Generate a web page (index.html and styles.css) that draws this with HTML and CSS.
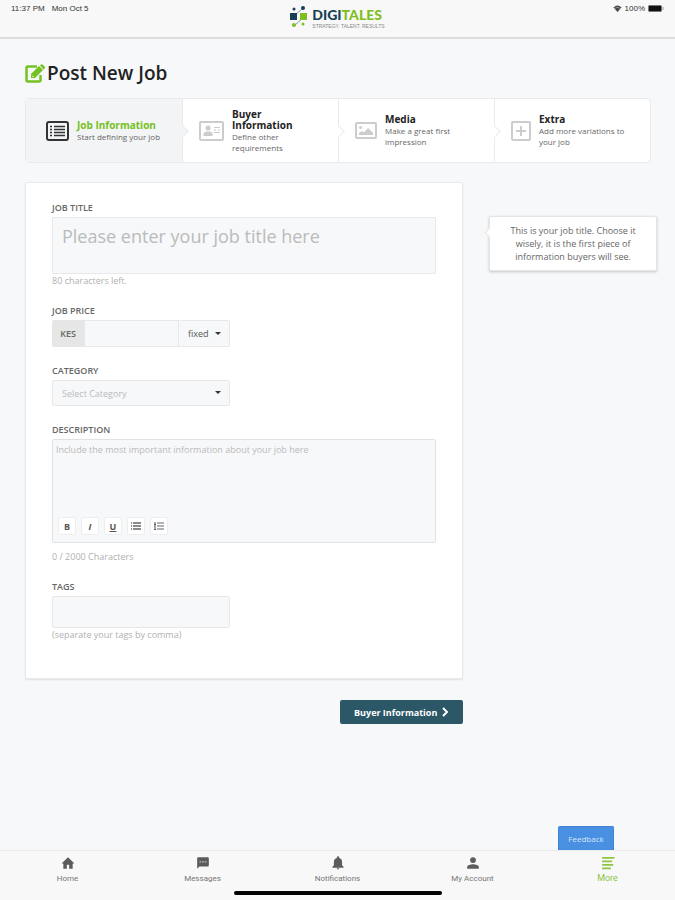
FILE: index.html
```html
<!DOCTYPE html>
<html lang="en">
<head>
  <meta charset="UTF-8">
  <meta name="viewport" content="width=device-width, initial-scale=1.0">
  <title>Post New Job</title>
  <link rel="stylesheet" href="styles.css">
</head>
<body>
  <header class="topbar">
    <div class="status-left"><span>11:37 PM</span><span>Mon Oct 5</span></div>
    <div class="logo">
      <svg width="18" height="22" viewBox="0 0 18 22">
        <path d="M4 10L13 2M5 19L14 11" stroke="#7f9aa6" stroke-width="1"/>
        <rect x="0" y="7" width="7" height="7" fill="#173f55"/>
        <rect x="10" y="7" width="7" height="7" fill="#80bd21"/>
        <circle cx="4" cy="3" r="1.5" fill="#173f55"/>
        <circle cx="13" cy="2" r="2" fill="#173f55"/>
        <circle cx="4" cy="19" r="2" fill="#80bd21"/>
        <circle cx="13" cy="18" r="1.5" fill="#80bd21"/>
      </svg>
      <div class="logo-text">
        <div class="logo-name">DIGI<span>TALES</span></div>
        <div class="logo-tag">STRATEGY. TALENT. RESULTS</div>
      </div>
    </div>
    <div class="status-right">
      <svg width="9" height="7" viewBox="0 0 18 14"><path d="M1 5Q9-3 17 5L9 14Z" fill="#444"/><path d="M3 7Q9 2 15 7" fill="none" stroke="#f8f8f8" stroke-width="1"/></svg>
      <span>100%</span>
      <svg width="16" height="7" viewBox="0 0 16 7"><rect x=".5" y=".5" width="13" height="6" rx="1" fill="#111" stroke="#777"/><path d="M15 2v3" stroke="#999"/></svg>
    </div>
  </header>

  <main class="content">
    <h1 class="page-title">
      <svg width="21" height="19" viewBox="0 0 21 19">
        <path d="M12 2.500H3Q1.500 2.500 1.500 4V16Q1.500 17.500 3 17.500H14Q15.500 17.500 15.500 16V11" fill="none" stroke="#74c120" stroke-width="2.500"/>
        <path d="M6 14V10L14 2L18 6L10 14ZM15 1.500L16 .5Q17 0 18 1L20 3Q20.500 4 19.500 4.500L18.500 5.500Z" fill="#74c120"/>
        <path d="M7 11.500L8.500 13" stroke="#fff" stroke-width="1"/>
      </svg>
      Post New Job
    </h1>

    <ol class="steps">
      <li class="step active">
        <svg class="step-icon" width="23" height="20" viewBox="0 0 23 20">
          <rect x="1" y="1" width="21" height="18" rx="2" fill="none" stroke="#333" stroke-width="2"/>
          <path d="M4 5.500h2M4 8.500h2M4 11.500h2M4 14.500h2M8 5.500h11M8 8.500h11M8 11.500h11M8 14.500h11" stroke="#333" stroke-width="1.500"/>
        </svg>
        <div><h2>Job Information</h2><p>Start defining your job</p></div>
      </li>
      <li class="step">
        <svg class="step-icon" width="25" height="20" viewBox="0 0 25 20">
          <rect x="1" y="1" width="23" height="18" rx="1" fill="none" stroke="#ccc" stroke-width="2"/>
          <circle cx="9" cy="7" r="2.500" fill="#ccc"/>
          <path d="M4.500 15v-2q0-2 3-2.500h3q3 .5 3 2.500v2z" fill="#ccc"/>
          <path d="M15 6.500h6M15 11.500h6M15 9h2M19 9h2" stroke="#ccc"/>
        </svg>
        <div><h2>Buyer Information</h2><p>Define other requirements</p></div>
      </li>
      <li class="step">
        <svg class="step-icon" width="22" height="18" viewBox="0 0 22 18">
          <rect x="1" y="1" width="20" height="15" rx="1" fill="none" stroke="#ccc" stroke-width="2"/>
          <circle cx="5.500" cy="5.500" r="1.500" fill="#ccc"/>
          <path d="M4 13v-2l3-2 2 1.500 4-4.500 5 5v2z" fill="#ccc"/>
        </svg>
        <div><h2>Media</h2><p>Make a great first impression</p></div>
      </li>
      <li class="step">
        <svg class="step-icon" width="20" height="20" viewBox="0 0 20 20">
          <rect x="1" y="1" width="18" height="18" rx="1" fill="none" stroke="#ccc" stroke-width="2"/>
          <path d="M10 5v10M5 10h10" stroke="#ccc" stroke-width="2"/>
        </svg>
        <div><h2>Extra</h2><p>Add more variations to your job</p></div>
      </li>
    </ol>

    <form class="job-form">
      <div class="form-main">
        <div class="card">
          <div class="field">
            <label for="title">JOB TITLE</label>
            <textarea id="title" class="title-input" placeholder="Please enter your job title here"></textarea>
            <p class="hint">80 characters left.</p>
          </div>
          <div class="field half">
            <label for="price">JOB PRICE</label>
            <div class="price-group">
              <span class="currency">KES</span>
              <input type="text" id="price">
              <div class="select-wrap price-type">
                <select aria-label="Price type"><option>fixed</option><option>hourly</option></select>
              </div>
            </div>
          </div>
          <div class="field half">
            <label for="category">CATEGORY</label>
            <div class="select-wrap category">
              <select id="category"><option>Select Category</option></select>
            </div>
          </div>
          <div class="field">
            <label for="description">DESCRIPTION</label>
            <div class="editor">
              <textarea id="description" placeholder="Include the most important information about your job here"></textarea>
              <div class="toolbar">
                <button type="button"><b>B</b></button>
                <button type="button"><b><i>I</i></b></button>
                <button type="button"><b><u>U</u></b></button>
                <button type="button" aria-label="Bulleted list"><svg width="10" height="8" viewBox="0 0 10 8"><path d="M0 1h1M2 1h8M0 4h1M2 4h8M0 7h1M2 7h8" stroke="#666" stroke-width="1.500"/></svg></button>
                <button type="button" aria-label="Numbered list"><svg width="10" height="8" viewBox="0 0 10 8"><path d="M1 0v8M0 2.500h2M0 7.500h2M3 1h7M3 4h7M3 7h7" stroke="#666" stroke-width="1.200"/></svg></button>
              </div>
            </div>
            <p class="hint count">0 / 2000 Characters</p>
          </div>
          <div class="field half">
            <label for="tags">TAGS</label>
            <input type="text" id="tags" class="tags-input">
            <p class="hint">(separate your tags by comma)</p>
          </div>
        </div>
        <button type="submit" class="next-btn">Buyer Information
          <svg width="7" height="10" viewBox="0 0 7 10"><path d="M1 1l4 4-4 4" fill="none" stroke="#fff" stroke-width="2"/></svg>
        </button>
      </div>
      <aside class="tip">This is your job title. Choose it wisely, it is the first piece of information buyers will see.</aside>
    </form>
  </main>

  <button type="button" class="feedback">Feedback</button>

  <footer class="tabbar">
    <nav class="tabs">
      <a href="#"><svg width="14" height="14" viewBox="0 0 24 24"><path d="M10 22v-7h4v7h6v-9h3L12 2 1 13h3v9z"/></svg>Home</a>
      <a href="#"><svg width="14" height="14" viewBox="0 0 24 24"><path d="M20 2H4a2 2 0 0 0-2 2v18l4-4h14a2 2 0 0 0 2-2V4a2 2 0 0 0-2-2z"/><path d="M6 10h3M10.500 10h3M15 10h3" stroke="#bbb" stroke-width="2"/></svg>Messages</a>
      <a href="#"><svg width="14" height="14" viewBox="0 0 24 24"><path d="M12 23a2.500 2.500 0 0 0 2.500-2h-5A2.500 2.500 0 0 0 12 23zM19 16v-6c0-3.500-2-6-5-6.700V2.500a2 2 0 0 0-4 0v.8C7 4 5 6.500 5 10v6l-2.500 2.500V20h19v-1.500z"/></svg>Notifications</a>
      <a href="#"><svg width="14" height="14" viewBox="0 0 24 24"><circle cx="12" cy="7" r="5"/><path d="M2 22v-3c0-3.500 6-5 10-5s10 1.500 10 5v3z"/></svg>My Account</a>
      <a href="#" class="current"><svg width="14" height="14" viewBox="0 0 24 24"><path d="M2 3h21M2 9h17M2 15h19M2 21h15" stroke="#8cc63f" stroke-width="3"/></svg>More</a>
    </nav>
    <div class="home-bar"></div>
  </footer>
</body>
</html>
```
FILE: styles.css
```css
* {
  box-sizing: border-box;
}
body {
  margin: 0;
  min-height: 100vh;
  display: flex;
  flex-direction: column;
  background-color: #f6f8fa;
  color: #666;
  font-family: "Open Sans", sans-serif;
  font-size: 9px;
}
h1, h2, p, ol {
  margin: 0;
  padding: 0;
}
input, textarea, select, button {
  font-family: inherit;
  font-size: 9px;
  color: #555;
  margin: 0;
}
input, textarea, select {
  display: block;
  width: 100%;
  background-color: #f6f8fa;
  border: 1px solid #e6e8e9;
  border-radius: 2px;
  outline: none;
  resize: none;
}
::placeholder {
  color: #bbb;
  opacity: 1;
}

/* top bar */
.topbar {
  height: 39px;
  display: grid;
  grid-template-columns: 1fr auto 1fr;
  padding: 3px 11px 0;
  background-color: #f8f8f8;
  border-bottom: 2px solid #dcddde;
  font-family: "Liberation Sans", sans-serif;
  font-size: 8px;
  line-height: 11px;
  color: #333;
}
.status-left {
  display: flex;
  gap: 7px;
}
.status-right {
  display: flex;
  justify-content: flex-end;
  align-items: center;
  gap: 3px;
  height: 11px;
}
.logo {
  display: flex;
  gap: 4px;
  padding-top: 3px;
}
.logo-name {
  font-family: Lato, sans-serif;
  font-weight: 900;
  font-size: 14px;
  line-height: 18px;
  color: #173f55;
}
.logo-name span {
  color: #80bd21;
}
.logo-tag {
  font-size: 5px;
  line-height: 1;
  color: #888;
  text-align: center;
}

.content {
  padding: 22px 24px 20px 25px;
  flex: 1;
}
.page-title {
  display: flex;
  align-items: center;
  gap: 1px;
  font-size: 19px;
  line-height: 24px;
  font-weight: 600;
  color: #222;
}

/* steps */
.steps {
  display: grid;
  grid-template-columns: repeat(4, 1fr);
  margin-top: 13px;
  min-height: 65px;
  list-style: none;
  background-color: #fff;
  border: 1px solid #e8eaec;
  border-radius: 4px;
}
.step {
  position: relative;
  display: flex;
  align-items: center;
  gap: 8px;
  padding: 0 16px;
  border-left: 1px solid #e8eaec;
}
.step:first-child {
  border-left: none;
  padding-left: 20px;
  padding-right: 8px;
}
.step.active {
  background-color: #f3f4f6;
}
.step:not(:last-child)::after {
  content: "";
  position: absolute;
  z-index: 1;
  right: -5px;
  top: 50%;
  width: 8px;
  height: 8px;
  margin-top: -4px;
  background-color: #fff;
  border-top: 1px solid #e8eaec;
  border-right: 1px solid #e8eaec;
  transform: rotate(45deg);
}
.step.active::after {
  background-color: #f3f4f6;
}
.step-icon {
  flex: none;
}
.step h2 {
  font-size: 10px;
  line-height: 11px;
  font-weight: 700;
  color: #222;
}
.step.active h2 {
  color: #74c120;
}
.step p {
  font-size: 8px;
  line-height: 11px;
}

/* form */
.job-form {
  display: flex;
  align-items: flex-start;
  gap: 26px;
  margin-top: 19px;
}
.form-main {
  flex: 0 0 70%;
}
.card {
  display: flex;
  flex-direction: column;
  gap: 18px;
  padding: 19px 26px 37px;
  background-color: #fff;
  border: 1px solid #e8eaec;
  border-radius: 2px;
  box-shadow: 0 1px 2px rgba(0, 0, 0, 0.1);
}
.half {
  width: 178px;
}
.field label {
  display: block;
  margin-bottom: 3px;
  font-size: 9px;
  line-height: 12px;
  font-weight: 600;
}
.hint {
  font-size: 9px;
  line-height: 13px;
  color: #b0b0b0;
}
.hint.count {
  margin-top: 7px;
}
.title-input {
  height: 57px;
  padding: 5px 9px;
  font-size: 18px;
  line-height: 26px;
}
.price-group {
  display: flex;
  height: 27px;
}
.currency {
  flex: 0 0 32px;
  line-height: 27px;
  text-align: center;
  font-weight: 600;
  background-color: #e6e6e6;
  border-radius: 2px 0 0 2px;
}
.price-group input {
  flex: 1;
  min-width: 0;
  border-radius: 0;
}
.price-type {
  flex: 0 0 51px;
}
.select-wrap {
  position: relative;
}
.select-wrap select {
  appearance: none;
  height: 26px;
  padding: 0 9px;
}
.price-type select {
  height: 27px;
  border-left: none;
}
.category select {
  color: #bbb;
}
.select-wrap::after {
  content: "";
  position: absolute;
  right: 9px;
  top: 50%;
  margin-top: -2px;
  border: 3px solid transparent;
  border-top-color: #333;
  border-bottom: none;
  pointer-events: none;
}
.editor {
  height: 104px;
  display: flex;
  flex-direction: column;
  background-color: #f6f8fa;
  border: 1px solid #e0e2e4;
  border-radius: 2px;
}
.editor textarea {
  flex: 1;
  padding: 3px;
  border: none;
  line-height: 13px;
}
.toolbar {
  display: flex;
  gap: 5px;
  padding: 0 5px 7px;
}
.toolbar button {
  display: flex;
  align-items: center;
  justify-content: center;
  width: 18px;
  height: 18px;
  padding: 0;
  background-color: #fff;
  border: 1px solid #eceeef;
  border-radius: 2px;
}
.tags-input {
  height: 32px;
}
.next-btn {
  display: flex;
  align-items: center;
  justify-content: center;
  gap: 5px;
  width: 123px;
  height: 24px;
  margin: 21px 0 0 auto;
  padding: 0;
  background-color: #2b5767;
  border: none;
  border-radius: 2px;
  color: #fff;
  font-weight: 700;
}
.tip {
  position: relative;
  flex: 1;
  margin: 34px -6px 0 0;
  padding: 7px 12px;
  background-color: #fff;
  border: 1px solid #e3e5e7;
  border-radius: 2px;
  box-shadow: 0 1px 3px rgba(0, 0, 0, 0.2);
  text-align: center;
  line-height: 13px;
}
.tip::before {
  content: "";
  position: absolute;
  left: -4px;
  top: 12px;
  width: 6px;
  height: 6px;
  background-color: #fff;
  border-left: 1px solid #e3e5e7;
  border-bottom: 1px solid #e3e5e7;
  transform: rotate(45deg);
}

.feedback {
  align-self: flex-end;
  width: 56px;
  height: 24px;
  margin-right: 61px;
  padding: 0;
  background-color: #4a90e2;
  border: 1px solid #3f83d3;
  border-bottom: none;
  border-radius: 2px 2px 0 0;
  color: #d5e6fa;
  font-size: 8px;
}

/* bottom tabs */
.tabbar {
  background-color: #f8f8f8;
  border-top: 1px solid #e8eaeb;
  padding: 5px 0;
}
.tabs {
  display: grid;
  grid-template-columns: repeat(5, 1fr);
}
.tabs a {
  display: flex;
  flex-direction: column;
  align-items: center;
  gap: 3px;
  font-family: Roboto, sans-serif;
  font-size: 8px;
  line-height: 11px;
  color: #777;
  text-decoration: none;
}
.tabs svg {
  fill: #5c5c5c;
}
.tabs .current {
  font-size: 9px;
  color: #8cc63f;
}
.home-bar {
  width: 208px;
  height: 4px;
  margin: 7px auto 0;
  background-color: #000;
  border-radius: 2px;
}
```
